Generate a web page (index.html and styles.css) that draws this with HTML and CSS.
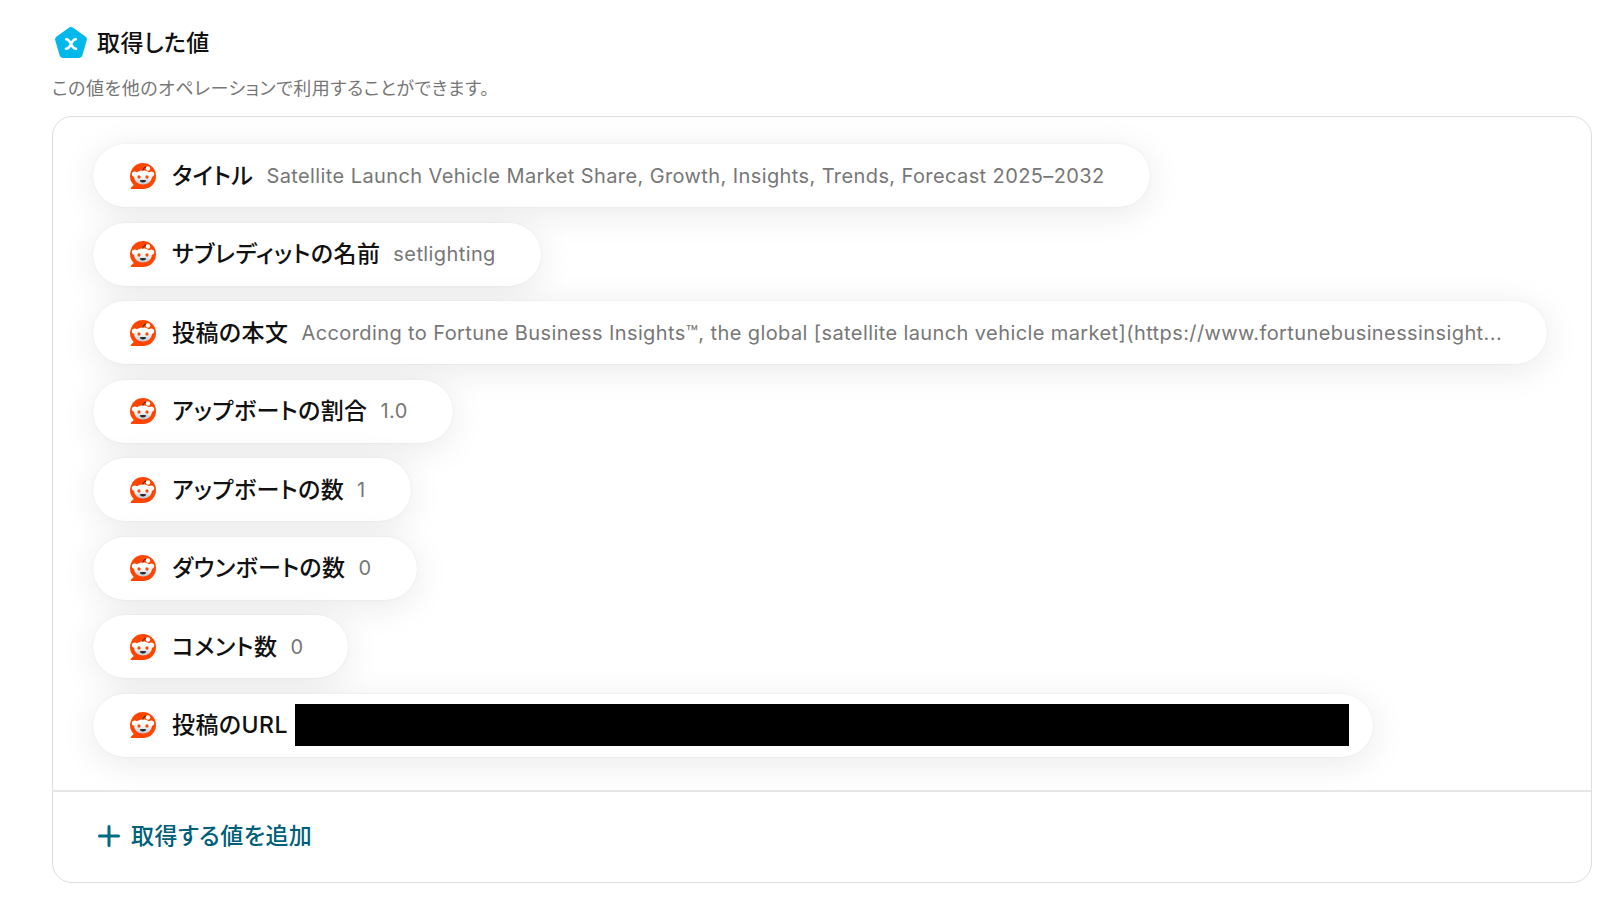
FILE: index.html
```
<!DOCTYPE html>
<html lang="ja">
<head>
    <meta charset="UTF-8">
    <meta name="viewport" content="width=device-width, initial-scale=1.0">
    <title>取得した値</title>
    <link rel="stylesheet" href="styles.css">
</head>
<body>
    <!-- shared reddit icon -->
    <svg class="sprite" aria-hidden="true">
        <defs>
            <linearGradient id="face" x1="0" y1="0" x2="0" y2="1">
                <stop offset="0.4" stop-color="#ffffff"/>
                <stop offset="1" stop-color="#b9c6cd"/>
            </linearGradient>
        </defs>
        <symbol id="reddit" viewBox="0 0 26 26">
            <path fill="#ff4500" d="M13 0a13 13 0 0 1 0 26H1.600c-.9 0-1.200-.9-.6-1.500L3.800 22A13 13 0 0 1 13 0z"/>
            <path fill="url(#face)" d="M13 7.600c2.500 0 4.400.6 5.900 1.600 2.500-1.600 5.300-.4 5.300 1.800 0 1.500-1 2.600-2.300 3.100-.1 4.500-4.200 7.500-8.900 7.500s-8.800-3-8.900-7.500C2.800 13.600 1.800 12.500 1.800 11c0-2.200 2.800-3.400 5.300-1.800 1.500-1 3.400-1.600 5.900-1.600z"/>
            <path fill="none" stroke="#262626" stroke-width="1" d="M12.800 7.600c.2-2 1.600-3.200 3.300-3.400"/>
            <circle cx="18" cy="5.500" r="2.200" fill="#fff"/>
            <ellipse cx="9" cy="14" rx="1.600" ry="1.800" fill="#ff4500"/>
            <ellipse cx="17" cy="14" rx="1.600" ry="1.800" fill="#ff4500"/>
            <path fill="#262626" d="M9.800 17.300q3.200-.6 6.400 0c-.5 3-5.900 3-6.400 0z"/>
        </symbol>
    </svg>
    <main class="container">
        <div class="header">
            <svg class="badge" viewBox="0 0 32 32" aria-hidden="true">
                <path fill="#00b9ea" d="M13.500 1a4 4 0 0 1 5 0L30.300 9.400a3.800 3.800 0 0 1 1.400 4.200l-4.300 14.600a3.900 3.900 0 0 1-3.700 2.800H8.300a3.900 3.900 0 0 1-3.700-2.800L.3 13.600a3.800 3.800 0 0 1 1.400-4.200z"/>
                <path fill="none" stroke="#fff" stroke-width="2.600" stroke-linecap="round" d="M11.200 12.200c5 0 4.400 9.600 9.800 9.600M20.800 12.200c-5 0-4.400 9.600-9.800 9.600"/>
            </svg>
            <h1>取得した値</h1>
        </div>
        <p class="description">この値を他のオペレーションで利用することができます。</p>
        <div class="card">
            <ul class="values">
                <li class="value"><svg class="icon" aria-hidden="true"><use href="#reddit"/></svg><span class="name">タイトル</span><span class="data">Satellite Launch Vehicle Market Share, Growth, Insights, Trends, Forecast 2025–2032</span></li>
                <li class="value"><svg class="icon" aria-hidden="true"><use href="#reddit"/></svg><span class="name">サブレディットの名前</span><span class="data">setlighting</span></li>
                <li class="value"><svg class="icon" aria-hidden="true"><use href="#reddit"/></svg><span class="name">投稿の本文</span><span class="data">According to Fortune Business Insights™, the global [satellite launch vehicle market](https://www.fortunebusinessinsight...</span></li>
                <li class="value"><svg class="icon" aria-hidden="true"><use href="#reddit"/></svg><span class="name">アップボートの割合</span><span class="data">1.0</span></li>
                <li class="value"><svg class="icon" aria-hidden="true"><use href="#reddit"/></svg><span class="name">アップボートの数</span><span class="data">1</span></li>
                <li class="value"><svg class="icon" aria-hidden="true"><use href="#reddit"/></svg><span class="name">ダウンボートの数</span><span class="data">0</span></li>
                <li class="value"><svg class="icon" aria-hidden="true"><use href="#reddit"/></svg><span class="name">コメント数</span><span class="data">0</span></li>
                <li class="value value-url"><svg class="icon" aria-hidden="true"><use href="#reddit"/></svg><span class="name">投稿のURL</span><span class="redacted"></span></li>
            </ul>
            <div class="footer">
                <button type="button" class="add">
                    <svg class="plus" viewBox="0 0 22 22" aria-hidden="true"><path fill="none" stroke="#006a83" stroke-width="3" stroke-linecap="round" d="M11 1.500v19M1.500 11h19"/></svg>
                    取得する値を追加
                </button>
            </div>
        </div>
    </main>
</body>
</html>
```
FILE: styles.css
```
*{
    margin: 0;
    padding: 0;
    box-sizing: border-box;
}
body{
    background-color: white;
    color: #111;
    font-family: Inter, "Noto Sans CJK JP", sans-serif;
    font-feature-settings: "palt";
}
.sprite{
    position: absolute;
    width: 0;
    height: 0;
}
.container{
    padding: 26px 8px 40px 52px;
}
.header{
    display: flex;
    align-items: center;
    gap: 10px;
    padding-left: 3px;
}
.badge{
    width: 32px;
    height: 34px;
}
h1{
    font-size: 23px;
    font-weight: 500;
    line-height: 32px;
    letter-spacing: 0.02em;
}
.description{
    margin-top: 17px;
    font-size: 18px;
    line-height: 24px;
    letter-spacing: 0.03em;
    color: #777;
}
.card{
    margin-top: 15px;
    border: 1px solid #dedede;
    border-radius: 20px;
}
.values{
    display: flex;
    flex-direction: column;
    align-items: flex-start;
    justify-content: space-between;
    min-height: 673px;
    padding: 27px 40px 33px;
    list-style: none;
}
.value{
    display: flex;
    align-items: center;
    max-width: 100%;
    height: 63px;
    padding: 0 45px 0 37px;
    border-radius: 32px;
    background-color: white;
    box-shadow: 0 6px 36px rgba(0, 0, 0, 0.09), 0 0 2px rgba(0, 0, 0, 0.08);
}
.icon{
    flex: none;
    width: 26px;
    height: 26px;
    margin-right: 16px;
}
.name{
    flex: none;
    font-size: 23px;
    font-weight: 500;
    line-height: 32px;
    letter-spacing: 0.02em;
}
.data{
    margin-left: 13px;
    font-size: 20px;
    line-height: 32px;
    letter-spacing: 0.02em;
    color: #777;
    white-space: nowrap;
}
.value-url{
    width: 1280px;
    padding-right: 24px;
}
.redacted{
    flex: 1;
    height: 42px;
    margin-left: 7px;
    background-color: black;
}
.footer{
    padding: 27px 45px 29px;
    border-top: 2px solid #e6e6e6;
}
.add{
    display: flex;
    align-items: center;
    gap: 11px;
    border: none;
    background: none;
    color: #005f7a;
    font: inherit;
    font-size: 23px;
    font-weight: 500;
    line-height: 34px;
    letter-spacing: 0.02em;
    cursor: pointer;
}
.plus{
    width: 22px;
    height: 22px;
}
```
